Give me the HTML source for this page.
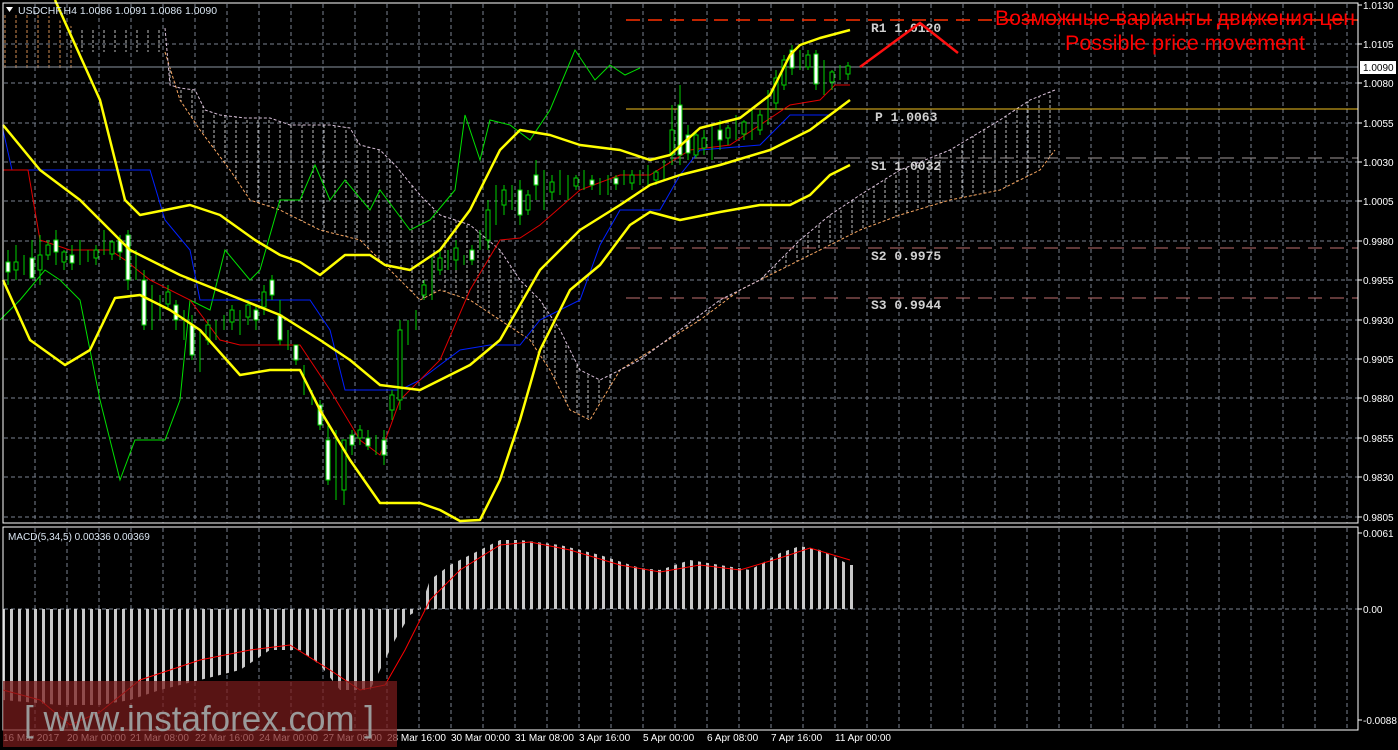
<!DOCTYPE html>
<html><head><meta charset="utf-8"><style>
html,body{margin:0;padding:0;background:#000;width:1398px;height:750px;overflow:hidden}
svg{display:block}
text{font-family:"Liberation Sans",sans-serif}
text.m{font-family:"Liberation Mono",monospace;font-weight:bold}
</style></head><body>
<svg width="1398" height="750" viewBox="0 0 1398 750" xmlns="http://www.w3.org/2000/svg">
<defs>
<pattern id="vs" width="11" height="5" patternUnits="userSpaceOnUse"><line x1="5" y1="0" x2="5" y2="3" stroke="#e0e0e0" stroke-width="1" opacity="0.85"/></pattern>
<pattern id="vo" width="11" height="5" patternUnits="userSpaceOnUse"><line x1="5" y1="0" x2="5" y2="3" stroke="#f4a460" stroke-width="1" opacity="0.85"/></pattern>
<pattern id="bars" width="8" height="10" patternUnits="userSpaceOnUse"><rect x="2" y="0" width="3" height="10" fill="#c8c8c8"/></pattern>
</defs>
<rect width="1398" height="750" fill="#000"/>
<g stroke="#7a8290" stroke-dasharray="4,3" stroke-width="1">
<path d="M4 44H1358M4 83H1358M4 123H1358M4 162H1358M4 201H1358M4 241H1358M4 280H1358M4 320H1358M4 359H1358M4 398H1358M4 438H1358M4 477H1358M4 517H1358M4 609H1358"/>
<path d="M35 4V523M67 4V523M99 4V523M131 4V523M163 4V523M195 4V523M227 4V523M259 4V523M291 4V523M323 4V523M355 4V523M387 4V523M419 4V523M451 4V523M483 4V523M515 4V523M547 4V523M579 4V523M611 4V523M643 4V523M675 4V523M707 4V523M739 4V523M771 4V523M803 4V523M835 4V523M867 4V523M899 4V523M931 4V523M963 4V523M995 4V523M1027 4V523M1059 4V523M1091 4V523M1123 4V523M1155 4V523M1187 4V523M1219 4V523M1251 4V523M1283 4V523M1315 4V523M1347 4V523"/>
<path d="M35 528V730M67 528V730M99 528V730M131 528V730M163 528V730M195 528V730M227 528V730M259 528V730M291 528V730M323 528V730M355 528V730M387 528V730M419 528V730M451 528V730M483 528V730M515 528V730M547 528V730M579 528V730M611 528V730M643 528V730M675 528V730M707 528V730M739 528V730M771 528V730M803 528V730M835 528V730M867 528V730M899 528V730M931 528V730M963 528V730M995 528V730M1027 528V730M1059 528V730M1091 528V730M1123 528V730M1155 528V730M1187 528V730M1219 528V730M1251 528V730M1283 528V730M1315 528V730M1347 528V730"/>
</g>
<polygon points="3,15 45,15 55,18 75,28 75,68 45,68 3,68" fill="url(#vo)"/>
<polygon points="50,28 165,28 165,52 75,52 60,35" fill="url(#vs)"/>
<polygon points="165,28 170,85 180,88 195,90 205,110 220,115 245,118 270,118 290,125 330,125 350,128 360,145 380,150 395,165 420,195 440,215 470,225 500,250 520,280 540,300 560,330 580,370 600,380 640,360 680,330 720,300 760,280 800,240 830,215 860,195 900,170 950,150 1000,120 1030,100 1055,90 1055,150 1040,170 1000,190 950,200 900,215 860,230 820,250 780,270 740,290 700,320 660,345 620,370 590,420 570,410 550,370 530,340 500,320 470,300 440,290 420,300 390,270 360,240 320,230 280,210 250,200 230,170 200,130 180,100 165,52" fill="url(#vs)"/>
<polyline points="165,52 180,100 200,130 230,170 250,200 280,210 320,230 360,240 390,270 420,300 440,290 470,300 500,320 530,340 550,370 570,410 590,420 620,370 660,345 700,320 740,290 780,270 820,250 860,230 900,215 950,200 1000,190 1040,170 1055,150" fill="none" stroke="#f4a460" stroke-dasharray="3,2"/>
<polyline points="165,28 170,85 180,88 195,90 205,110 220,115 245,118 270,118 290,125 330,125 350,128 360,145 380,150 395,165 420,195 440,215 470,225 500,250 520,280 540,300 560,330 580,370 600,380 640,360 680,330 720,300 760,280 800,240 830,215 860,195 900,170 950,150 1000,120 1030,100 1055,90" fill="none" stroke="#d8bfd8" stroke-dasharray="3,2"/>
<line x1="4" y1="67" x2="1358" y2="67" stroke="#8a93a0"/>
<line x1="626" y1="20" x2="1358" y2="20" stroke="#ff3000" stroke-width="1.5" stroke-dasharray="14,8"/>
<line x1="626" y1="109" x2="1358" y2="109" stroke="#f0c020"/>
<line x1="626" y1="158" x2="1358" y2="158" stroke="#a09898" stroke-dasharray="14,8"/>
<line x1="626" y1="248" x2="1358" y2="248" stroke="#c07070" stroke-dasharray="14,8"/>
<line x1="626" y1="298" x2="1358" y2="298" stroke="#c07070" stroke-dasharray="14,8"/>
<g fill="#d0d0d0" font-size="13">
<text class="m" x="871" y="32">R1 1.0120</text><text class="m" x="875" y="121">P 1.0063</text><text class="m" x="871" y="170">S1 1.0032</text><text class="m" x="871" y="260">S2 0.9975</text><text class="m" x="871" y="309">S3 0.9944</text>
</g>
<polyline points="0,320 20,300 45,270 60,280 80,300 100,400 120,480 135,440 150,440 165,440 180,400 190,300 210,310 225,250 250,280 260,270 280,200 300,200 315,165 330,200 345,180 370,210 380,190 395,210 410,230 430,220 455,190 465,115 480,160 490,120 510,125 530,140 550,110 575,50 595,80 610,65 625,75 640,68" fill="none" stroke="#00e000"/>
<polyline points="3,130 12,170 150,170 165,220 190,250 200,300 310,300 330,330 345,390 400,390 420,380 460,350 490,345 520,345 540,320 580,300 600,245 620,210 660,210 680,175 700,150 760,145 790,115 830,115" fill="none" stroke="#0020ff"/>
<polyline points="3,170 28,170 40,240 70,250 110,250 125,260 150,280 190,300 220,340 240,345 300,345 330,390 360,440 380,455 400,400 440,360 470,290 500,240 520,238 540,225 580,190 620,175 650,175 690,150 730,145 760,125 790,105 820,100 835,85 850,85" fill="none" stroke="#e00000"/>
<g stroke="#00d000" stroke-width="1">
<path d="M8 250V285M16 245V280M24 255V275M32 240V270M40 235V285M48 240V260M56 230V265M64 250V270M72 245V270M80 240V265M88 250V262M96 245V265M104 230V255M112 240V260M120 235V260M128 230V290M136 250V280M144 270V330M152 285V330M160 295V320M168 285V310M176 300V330M184 310V340M192 315V360M200 330V372M208 320V345M216 320V340M224 315V330M232 305V330M240 310V335M248 300V325M256 305V330M264 285V315M272 275V300M280 300V345M288 330V350M296 345V365M304 365V395M312 390V405M320 400V430M328 425V485M336 430V500M344 440V505M352 430V455M360 425V445M368 430V450M376 435V455M384 430V465M392 390V420M400 320V410M408 320V345M416 310V330M424 280V300M432 255V300M440 250V275M448 250V270M456 240V270M464 255V265M472 245V265M480 230V250M488 200V250M496 185V225M504 185V215M512 185V210M520 180V225M528 190V215M536 160V200M544 170V210M552 175V200M560 170V195M568 175V200M576 175V190M584 170V190M592 175V190M600 178V195M608 175V195M616 175V190M624 170V185M632 170V190M640 170V185M648 165V185M656 170V185M664 160V180M672 105V165M680 85V165M688 125V160M696 130V158M704 130V155M712 125V160M720 120V150M728 125V145M736 115V140M744 120V140M752 110V140M760 110V135M768 90V125M776 70V110M784 55V90M792 45V75M800 50V70M808 50V70M816 50V90M824 60V95M832 70V90M840 65V80M848 62V80"/>
</g>
<g fill="#fff" stroke="#00d000">
<rect x="6" y="262" width="4" height="10"/><rect x="30" y="258" width="4" height="20"/><rect x="54" y="240" width="4" height="12"/><rect x="70" y="255" width="4" height="8"/><rect x="118" y="240" width="4" height="12"/><rect x="126" y="235" width="4" height="45"/><rect x="142" y="280" width="4" height="45"/><rect x="174" y="305" width="4" height="15"/><rect x="190" y="325" width="4" height="30"/><rect x="254" y="310" width="4" height="10"/><rect x="270" y="280" width="4" height="15"/><rect x="278" y="315" width="4" height="25"/><rect x="294" y="345" width="4" height="15"/><rect x="318" y="405" width="4" height="20"/><rect x="326" y="440" width="4" height="40"/><rect x="350" y="435" width="4" height="10"/><rect x="366" y="438" width="4" height="8"/><rect x="382" y="440" width="4" height="15"/><rect x="470" y="250" width="4" height="10"/><rect x="518" y="190" width="4" height="25"/><rect x="534" y="175" width="4" height="10"/><rect x="590" y="180" width="4" height="5"/><rect x="614" y="178" width="4" height="6"/><rect x="678" y="105" width="4" height="50"/><rect x="686" y="135" width="4" height="18"/><rect x="718" y="130" width="4" height="10"/><rect x="790" y="50" width="4" height="18"/><rect x="814" y="54" width="4" height="30"/></g>
<g fill="#000" stroke="#00d000">
<rect x="14" y="262" width="4" height="8"/><rect x="38" y="255" width="4" height="15"/><rect x="46" y="245" width="4" height="10"/><rect x="62" y="252" width="4" height="10"/><rect x="94" y="250" width="4" height="8"/><rect x="110" y="242" width="4" height="12"/><rect x="166" y="292" width="4" height="12"/><rect x="206" y="325" width="4" height="15"/><rect x="230" y="310" width="4" height="12"/><rect x="246" y="305" width="4" height="12"/><rect x="262" y="292" width="4" height="15"/><rect x="342" y="440" width="4" height="50"/><rect x="358" y="430" width="4" height="8"/><rect x="390" y="395" width="4" height="15"/><rect x="398" y="330" width="4" height="70"/><rect x="422" y="285" width="4" height="10"/><rect x="438" y="258" width="4" height="12"/><rect x="454" y="248" width="4" height="12"/><rect x="486" y="210" width="4" height="30"/><rect x="502" y="190" width="4" height="15"/><rect x="526" y="195" width="4" height="15"/><rect x="550" y="182" width="4" height="10"/><rect x="574" y="178" width="4" height="8"/><rect x="630" y="175" width="4" height="8"/><rect x="654" y="172" width="4" height="8"/><rect x="670" y="130" width="4" height="25"/><rect x="694" y="135" width="4" height="20"/><rect x="702" y="138" width="4" height="10"/><rect x="726" y="128" width="4" height="10"/><rect x="742" y="122" width="4" height="12"/><rect x="758" y="115" width="4" height="15"/><rect x="774" y="78" width="4" height="25"/><rect x="782" y="60" width="4" height="25"/><rect x="806" y="55" width="4" height="12"/><rect x="830" y="72" width="4" height="10"/><rect x="846" y="66" width="4" height="8"/></g>
<g fill="none" stroke="#ffff00" stroke-width="2.5" stroke-linejoin="round">
<polyline points="55,0 100,100 125,200 140,215 190,205 220,215 255,240 280,255 300,262 320,275 345,255 370,255 385,265 410,270 440,250 470,210 500,150 520,130 550,135 580,145 620,150 650,160 670,155 700,128 740,118 770,95 790,55 800,45 820,38 850,30"/>
<polyline points="3,125 40,170 80,200 130,250 180,275 230,295 280,315 320,340 350,360 380,385 420,390 440,380 470,365 500,340 540,270 580,230 620,205 650,185 680,175 720,165 770,150 810,130 850,100"/>
<polyline points="3,280 30,340 65,365 90,350 115,298 140,295 170,310 200,330 240,375 270,370 300,370 320,410 350,460 380,503 420,503 440,510 460,521 480,520 500,480 520,420 540,350 570,290 600,265 630,225 650,212 680,220 720,212 760,205 790,205 810,195 830,175 850,165"/>
</g>
<polyline points="860,67 920,23 958,53" fill="none" stroke="#ff1010" stroke-width="2.5"/>
<text x="995" y="25" fill="#ff0000" font-size="21" textLength="360" lengthAdjust="spacingAndGlyphs">Возможные варианты движения цен</text>
<text x="1065" y="50" fill="#ff0000" font-size="21" textLength="240" lengthAdjust="spacingAndGlyphs">Possible price movement</text>
<polygon points="6,7 13,7 9.5,12" fill="#fff"/>
<text x="18" y="14" fill="#d8e4f0" font-size="10.5">USDCHF,H4  1.0086 1.0091 1.0086 1.0090</text>
<polygon points="3,609 3,700 60,705 100,705 130,700 160,690 200,680 240,670 270,650 300,650 320,665 340,690 370,690 395,640 410,615 420,609 430,580 450,565 470,555 500,540 520,540 560,545 600,555 640,568 660,570 690,560 720,565 750,570 780,553 800,546 820,550 850,565 855,565 855,609" fill="url(#bars)"/>
<polyline points="3,690 40,700 70,725 100,712 140,680 200,660 250,650 290,645 330,670 360,690 385,685 405,650 430,600 460,570 500,545 530,542 570,550 620,565 660,572 700,565 740,570 780,558 810,548 850,560" fill="none" stroke="#ff0000"/>
<text x="8" y="540" fill="#d8e4f0" font-size="10">MACD(5,34,5) 0.00336 0.00369</text>
<g stroke="#fff" fill="none">
<path d="M3 3H1358V523H3Z"/><path d="M3 527H1358V730H3Z"/>
</g>
<g fill="#fff" font-size="10">
<text x="1363" y="9">1.0130</text><text x="1363" y="48">1.0105</text><text x="1363" y="87">1.0080</text><text x="1363" y="127">1.0055</text><text x="1363" y="166">1.0030</text><text x="1363" y="205">1.0005</text><text x="1363" y="245">0.9980</text><text x="1363" y="284">0.9955</text><text x="1363" y="324">0.9930</text><text x="1363" y="363">0.9905</text><text x="1363" y="402">0.9880</text><text x="1363" y="442">0.9855</text><text x="1363" y="481">0.9830</text><text x="1363" y="521">0.9805</text>
<text x="1363" y="537">0.0061</text><text x="1363" y="613">0.00</text><text x="1363" y="724">-0.0088</text>
</g>
<g stroke="#fff"><path d="M1358 5h4M1358 44h4M1358 83h4M1358 123h4M1358 162h4M1358 201h4M1358 241h4M1358 280h4M1358 320h4M1358 359h4M1358 398h4M1358 438h4M1358 477h4M1358 517h4M1358 533h4M1358 609h4M1358 720h4"/></g>
<rect x="1360" y="61" width="36" height="13" fill="#fff"/>
<text x="1363" y="71" fill="#000" font-size="10">1.0090</text>
<g fill="#fff" font-size="10">
<text x="3" y="741">16 Mar 2017</text><text x="67" y="741">20 Mar 00:00</text><text x="130" y="741">21 Mar 08:00</text><text x="195" y="741">22 Mar 16:00</text><text x="259" y="741">24 Mar 00:00</text><text x="323" y="741">27 Mar 08:00</text><text x="387" y="741">28 Mar 16:00</text><text x="451" y="741">30 Mar 00:00</text><text x="515" y="741">31 Mar 08:00</text><text x="579" y="741">3 Apr 16:00</text><text x="643" y="741">5 Apr 00:00</text><text x="707" y="741">6 Apr 08:00</text><text x="771" y="741">7 Apr 16:00</text><text x="835" y="741">11 Apr 00:00</text>
</g>
<rect x="3" y="681" width="394" height="66" fill="#7a1c1c" opacity="0.72"/>
<text x="24" y="731" fill="#9a9a9a" font-size="36" textLength="350" lengthAdjust="spacingAndGlyphs">[ www.instaforex.com ]</text>
</svg>
</body></html>
